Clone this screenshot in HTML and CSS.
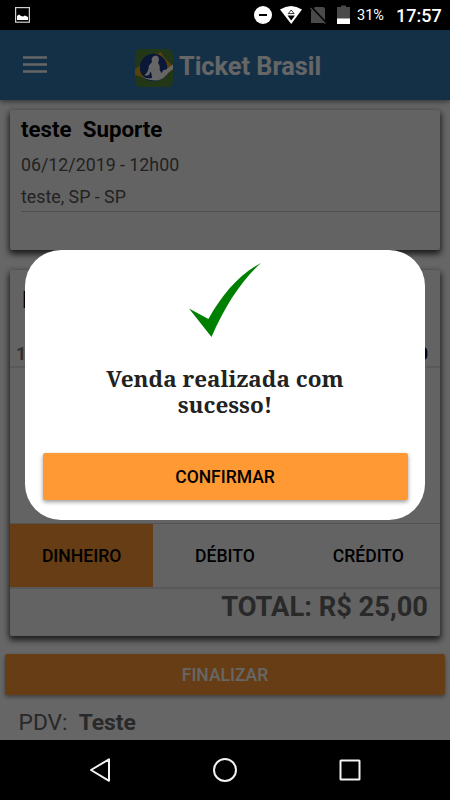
FILE: index.html
```html
<!DOCTYPE html>
<html lang="pt-BR">
<head>
<meta charset="utf-8">
<title>Ticket Brasil</title>
<link rel="stylesheet" href="styles.css">
</head>
<body>
<div class="phone">
  <div class="statusbar">
    <svg class="shot" width="15" height="16" viewBox="0 0 15 16"><rect x=".6" y=".6" width="13.800" height="14.600" fill="none" stroke="#d0d0d0" stroke-width="1.200"/><path d="M2 13V9l2-1.500L6 9l2 .5L10 8.500l3 1.500v3z" fill="#fff"/></svg>
    <div class="status-icons">
      <svg width="112" height="22" viewBox="250 4 112 22">
        <circle cx="263" cy="15" r="9" fill="#fff"/><path d="M259 15h8" stroke="#000" stroke-width="2"/>
        <path d="M280 9.500Q291 2.500 302 9.500L291.200 24z" fill="#fff"/>
        <path d="M288.300 13.600l2.900-3.600 2.900 3.600z" fill="#fff" stroke="#000" stroke-width=".8"/><path d="M287.500 15.500h7.400l-3.700 5z" fill="#000"/>
        <path d="M315 7h8q2 0 2 2v14h-14V11z" fill="#4a4a4a"/><path d="M311.500 7.500l15 16" stroke="#000" stroke-width="2.500"/><path d="M310.500 8l14.700 15.500" stroke="#4a4a4a" stroke-width="1.300"/>
        <path d="M337 7h4V5.500h5V7h4v12h-13z" fill="#4a4a4a"/><path d="M337 18.500h13V24h-13z" fill="#fff"/>
      </svg>
      <span class="battery">31%</span><span class="clock">17:57</span>
    </div>
  </div>
  <div class="app">
    <header class="appbar">
      <svg class="menu" width="24" height="18" viewBox="0 0 24 18"><path d="M0 2.500h24M0 9.500h24M0 16.500h24" stroke="#fff" stroke-width="2.600"/></svg>
      <svg class="logo" width="38" height="38" viewBox="0 0 38 38">
        <rect width="38" height="38" rx="5.500" fill="#558b3c"/>
        <path d="M0 20L6 16 23 4.500 26 3l2 4 9.500 10v4L22 32 0 26z" fill="#d9a522"/>
        <circle cx="18.500" cy="18.500" r="13.700" fill="#1c3a88"/>
        <path d="M6 26.500Q11 30 17 29 25 28 28.500 21q3 0 5-2.500l4.500-3V20q-5 3-7 6.500-5 5.500-12 5Q11 31 6 26.500z" fill="#fff"/>
        <path d="M18 7.500l3-1 2.500 1.500.5 3-1 3q2.500 3 1.500 6.500l2.500 5-3 4h-7l-.5-5-1-2-1.500 3.500-3.500 1-.5-1.500 2-2 1.500-3.500.5-3.500 3-3.500-.5-3z" fill="#fff"/>
      </svg>
      <h1>Ticket Brasil</h1>
    </header>
    <main class="content">
      <section class="card event">
        <h2>teste&nbsp; Suporte</h2>
        <p class="date">06/12/2019 - 12h00</p>
        <p class="place">teste, SP - SP</p>
      </section>
      <section class="card order">
        <div class="order-head"><b>I</b></div>
        <div class="order-row"><span>1</span><b>0</b></div>
        <div class="order-space"></div>
        <div class="methods"><div class="selected">DINHEIRO</div><div>DÉBITO</div><div>CRÉDITO</div></div>
        <div class="total">TOTAL: R$ 25,00</div>
      </section>
      <div class="button finish">FINALIZAR</div>
      <p class="pdv"><span>PDV:</span><b>Teste</b></p>
    </main>
  </div>
  <div class="scrim">
    <div class="dialog">
      <svg class="check" width="72" height="75" viewBox="0 0 72 75"><path d="M0 45.500L19.500 56C32 33 50 11 72 0 52 18 36 43 22.500 74z" fill="#008000"/></svg>
      <p class="message">Venda realizada com<br>sucesso!</p>
      <div class="button confirm">CONFIRMAR</div>
    </div>
  </div>
  <nav class="navbar">
    <svg width="450" height="60" viewBox="0 740 450 60" fill="none" stroke="#f2f2f2" stroke-width="2"><path d="M109 759.300v21.500L91 770z" stroke-linejoin="round"/><circle cx="225" cy="770" r="11"/><rect x="340.500" y="760.500" width="19" height="19" rx=".5"/></svg>
  </nav>
</div>
</body>
</html>
```

FILE: styles.css
```css
* { box-sizing: border-box; }
body, h1, h2, p { margin: 0; }
body { font-family: Roboto, sans-serif; background: #000; overflow: hidden; }
.phone { position: relative; width: 450px; height: 800px; display: flex; flex-direction: column; }
svg { display: block; flex: none; }
.statusbar { height: 30px; display: flex; justify-content: space-between; align-items: flex-start; padding: 0 10px 0 15px; background: #000; color: #fff; }
.shot { margin-top: 7px; }
.status-icons { display: flex; height: 30px; align-items: center; }
.battery { width: 27px; margin-right: 12px; margin-left: -5px; font-size: 14.500px; white-space: nowrap; line-height: 33px; }
.clock { width: 44px; font-size: 18px; font-weight: 500; line-height: 31px; white-space: nowrap; }
.app { height: 710px; background: #fff; display: flex; flex-direction: column; }
.appbar { height: 70px; flex: none; background: #3478b0; display: flex; align-items: flex-start; padding: 19px 23px; color: #fff; box-shadow: 0 2px 5px rgba(0,0,0,.45); position: relative; }
.menu { margin-top: 6px; }
.logo { margin-left: 88px; }
h1 { margin-left: 6px; font-size: 25.300px; line-height: 36px; font-weight: 700; white-space: nowrap; }
.content { flex: 1; padding: 10px 5px 0; }
.card { background: #f8f8f8; margin: 0 5px; border-radius: 2px; box-shadow: 0 3px 6px 1px rgba(0,0,0,.75); }
.event { height: 140px; padding: 6px 0 0 11px; }
h2 { font-size: 22.300px; line-height: 26px; font-weight: 700; }
.date, .place { font-size: 17.800px; color: #555; }
.date { line-height: 24px; margin-top: 11px; }
.place { line-height: 27px; margin-top: 6px; padding-bottom: 1px; border-bottom: 1px solid #c8c8c8; }
.order { height: 366px; margin-top: 20px; display: flex; flex-direction: column; }
.order-head { height: 72px; padding: 17px 12px; font-size: 23px; line-height: 28px; }
.order-row { height: 26px; border-bottom: 2px solid #dedede; display: flex; justify-content: space-between; padding: 0 12px 0 6px; font-size: 18px; line-height: 24px; }
.order-row span { font-weight: 700; color: #777; }
.order-space { flex: 1; }
.methods { height: 66px; border-top: 1px solid #d0d0d0; border-bottom: 2px solid #dedede; display: grid; grid-template-columns: repeat(3, 1fr); }
.methods div { font-size: 17.600px; font-weight: 500; line-height: 62px; height: 63px; text-align: center; padding-top: 1px; }
.methods .selected { background: #ff9933; }
.total { height: 47px; padding-right: 12px; text-align: right; font-size: 27.300px; line-height: 37px; font-weight: 700; color: #666; }
.button { border-radius: 2px; background: #ff9933; text-align: center; font-size: 17.500px; font-weight: 500; box-shadow: 0 2px 4px rgba(0,0,0,.4); }
.finish { margin-top: 18px; height: 41px; line-height: 43px; color: #fff; }
.pdv { padding: 13px 13.500px; display: flex; gap: 11px; font-size: 22.800px; line-height: 30px; color: #666; }
.scrim { position: absolute; left: 0; top: 30px; width: 450px; height: 710px; background: rgba(0,0,0,.6); display: flex; align-items: center; justify-content: center; }
.dialog { width: 400px; height: 270px; border-radius: 36px; background: #fff; padding: 13px 17.500px 0; }
.check { margin: 0 0 0 146.500px; }
.message { margin-top: 28px; font-family: "Noto Serif", "DejaVu Serif Condensed", serif; font-size: 22.500px; line-height: 26px; font-weight: 700; text-align: center; color: #222; white-space: nowrap; }
.confirm { margin-top: 35px; height: 47px; line-height: 49px; color: #000; }
.navbar { height: 60px; background: #000; }
```
